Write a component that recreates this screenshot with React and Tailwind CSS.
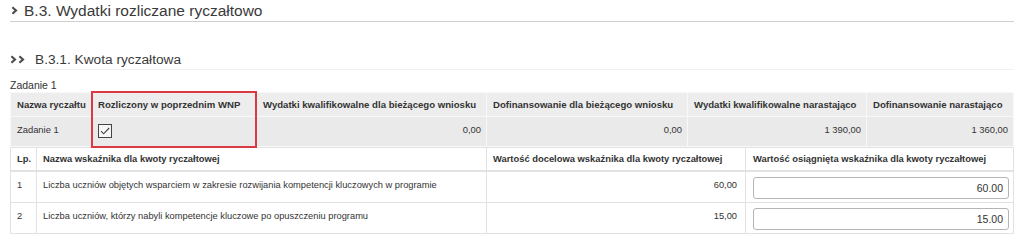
import React from "react";

const font = { fontFamily: '"Liberation Sans", Arial, sans-serif' };

function Chevron() {
  return (
    <svg width="7" height="9" viewBox="0 0 7 9" className="shrink-0">
      <path d="M1.4 1.3 L5 4.5 L1.4 7.7" fill="none" stroke="#4a4a4a" strokeWidth="2.1" />
    </svg>
  );
}

function CheckedBox() {
  return (
    <svg width="14" height="14" viewBox="0 0 14 14">
      <rect x="0.5" y="0.5" width="13" height="13" fill="#f6f6f6" stroke="#444" strokeWidth="1" />
      <path d="M3 7.2 L5.6 9.8 L11.2 4" fill="none" stroke="#444" strokeWidth="1.1" />
    </svg>
  );
}

const summaryCols = [
  { label: "Nazwa ryczałtu", w: "w-[81px]" },
  { label: "Rozliczony w poprzednim WNP", w: "w-[165px]" },
  { label: "Wydatki kwalifikowalne dla bieżącego wniosku", w: "w-[230px]" },
  { label: "Dofinansowanie dla bieżącego wniosku", w: "w-[201px]" },
  { label: "Wydatki kwalifikowalne narastająco", w: "w-[179px]" },
  { label: "Dofinansowanie narastająco", w: "w-[147px]" },
];

const indicators = [
  { lp: 1, name: "Liczba uczniów objętych wsparciem w zakresie rozwijania kompetencji kluczowych w programie", target: "60,00", value: "60.00" },
  { lp: 2, name: "Liczba uczniów, którzy nabyli kompetencje kluczowe po opuszczeniu programu", target: "15,00", value: "15.00" },
];

export default function App() {
  return (
    <div className="w-[1024px] h-[244px] bg-white overflow-hidden text-[#333]" style={font}>
      <div className="pl-[10px] w-[1014px]">
        {/* B.3 */}
        <div className="h-[22px] border-b border-[#cfcfcf] flex items-center gap-[6px] pl-[1px]">
          <Chevron />
          <span className="text-[15.5px] leading-[20px] text-[#3a3a3a]">B.3. Wydatki rozliczane ryczałtowo</span>
        </div>

        {/* B.3.1 */}
        <div className="mt-[28px] h-[20px] border-b border-[#f0f0f0] flex items-center">
          <Chevron />
          <span className="ml-[1px]"><Chevron /></span>
          <span className="ml-[10px] text-[13.7px] leading-[18px] text-[#3a3a3a]">B.3.1. Kwota ryczałtowa</span>
        </div>

        <div className="mt-[8px] text-[10.5px] leading-[14px]">Zadanie 1</div>

        {/* summary table */}
        <div className="relative">
          <table className="border-collapse table-fixed w-[1003px] text-[9.4px] leading-[13px]">
            <thead>
              <tr className="h-[24px] bg-[#ededed]">
                {summaryCols.map((c) => (
                  <th key={c.label} className={`${c.w} border border-[#f8f8f8] px-[6px] text-left font-bold text-[9.6px] whitespace-nowrap`}>
                    {c.label}
                  </th>
                ))}
              </tr>
            </thead>
            <tbody>
              <tr className="h-[30px] bg-[#eaeaea] align-top">
                <td className="border border-[#f8f8f8] px-[6px] pt-[6px]">Zadanie 1</td>
                <td className="border border-[#f8f8f8] px-[6px] pt-[7px]"><CheckedBox /></td>
                <td className="border border-[#f8f8f8] px-[5px] pt-[6px] text-right">0,00</td>
                <td className="border border-[#f8f8f8] px-[5px] pt-[6px] text-right">0,00</td>
                <td className="border border-[#f8f8f8] px-[5px] pt-[6px] text-right">1 390,00</td>
                <td className="border border-[#f8f8f8] px-[5px] pt-[6px] text-right">1 360,00</td>
              </tr>
            </tbody>
          </table>
          <div className="absolute left-[81px] top-[-1px] w-[166px] h-[57px] border-2 border-[#d93a44] pointer-events-none" />
        </div>

        {/* indicators table */}
        <table className="border-collapse table-fixed w-[1003px] text-[9.3px] leading-[13px]">
          <thead>
            <tr className="h-[23px] text-[9.4px]">
              <th className="w-[26px] border border-[#e2e2e2] border-b-2 px-[6px] text-left font-bold">Lp.</th>
              <th className="w-[450px] border border-[#e2e2e2] border-b-2 px-[6px] text-left font-bold">Nazwa wskaźnika dla kwoty ryczałtowej</th>
              <th className="w-[259px] border border-[#e2e2e2] border-b-2 px-[6px] text-left font-bold">Wartość docelowa wskaźnika dla kwoty ryczałtowej</th>
              <th className="w-[268px] border border-[#e2e2e2] border-b-2 px-[7px] text-left font-bold">Wartość osiągnięta wskaźnika dla kwoty ryczałtowej</th>
            </tr>
          </thead>
          <tbody>
            {indicators.map((r) => (
              <tr key={r.lp} className="h-[31px] align-top">
                <td className="border border-[#e2e2e2] px-[6px] pt-[7px]">{r.lp}</td>
                <td className="border border-[#e2e2e2] px-[6px] pt-[7px]">{r.name}</td>
                <td className="border border-[#e2e2e2] px-[8px] pt-[7px] text-right">{r.target}</td>
                <td className="border border-[#e2e2e2] pl-[7px] pr-[4px] pt-[5px] pb-[3px]">
                  <input
                    readOnly
                    value={r.value}
                    className="w-full h-[22px] border border-[#b5b5b5] rounded-[3px] px-[5px] text-right text-[10.5px] text-[#333] bg-white outline-none"
                    style={font}
                  />
                </td>
              </tr>
            ))}
          </tbody>
        </table>
      </div>
    </div>
  );
}
